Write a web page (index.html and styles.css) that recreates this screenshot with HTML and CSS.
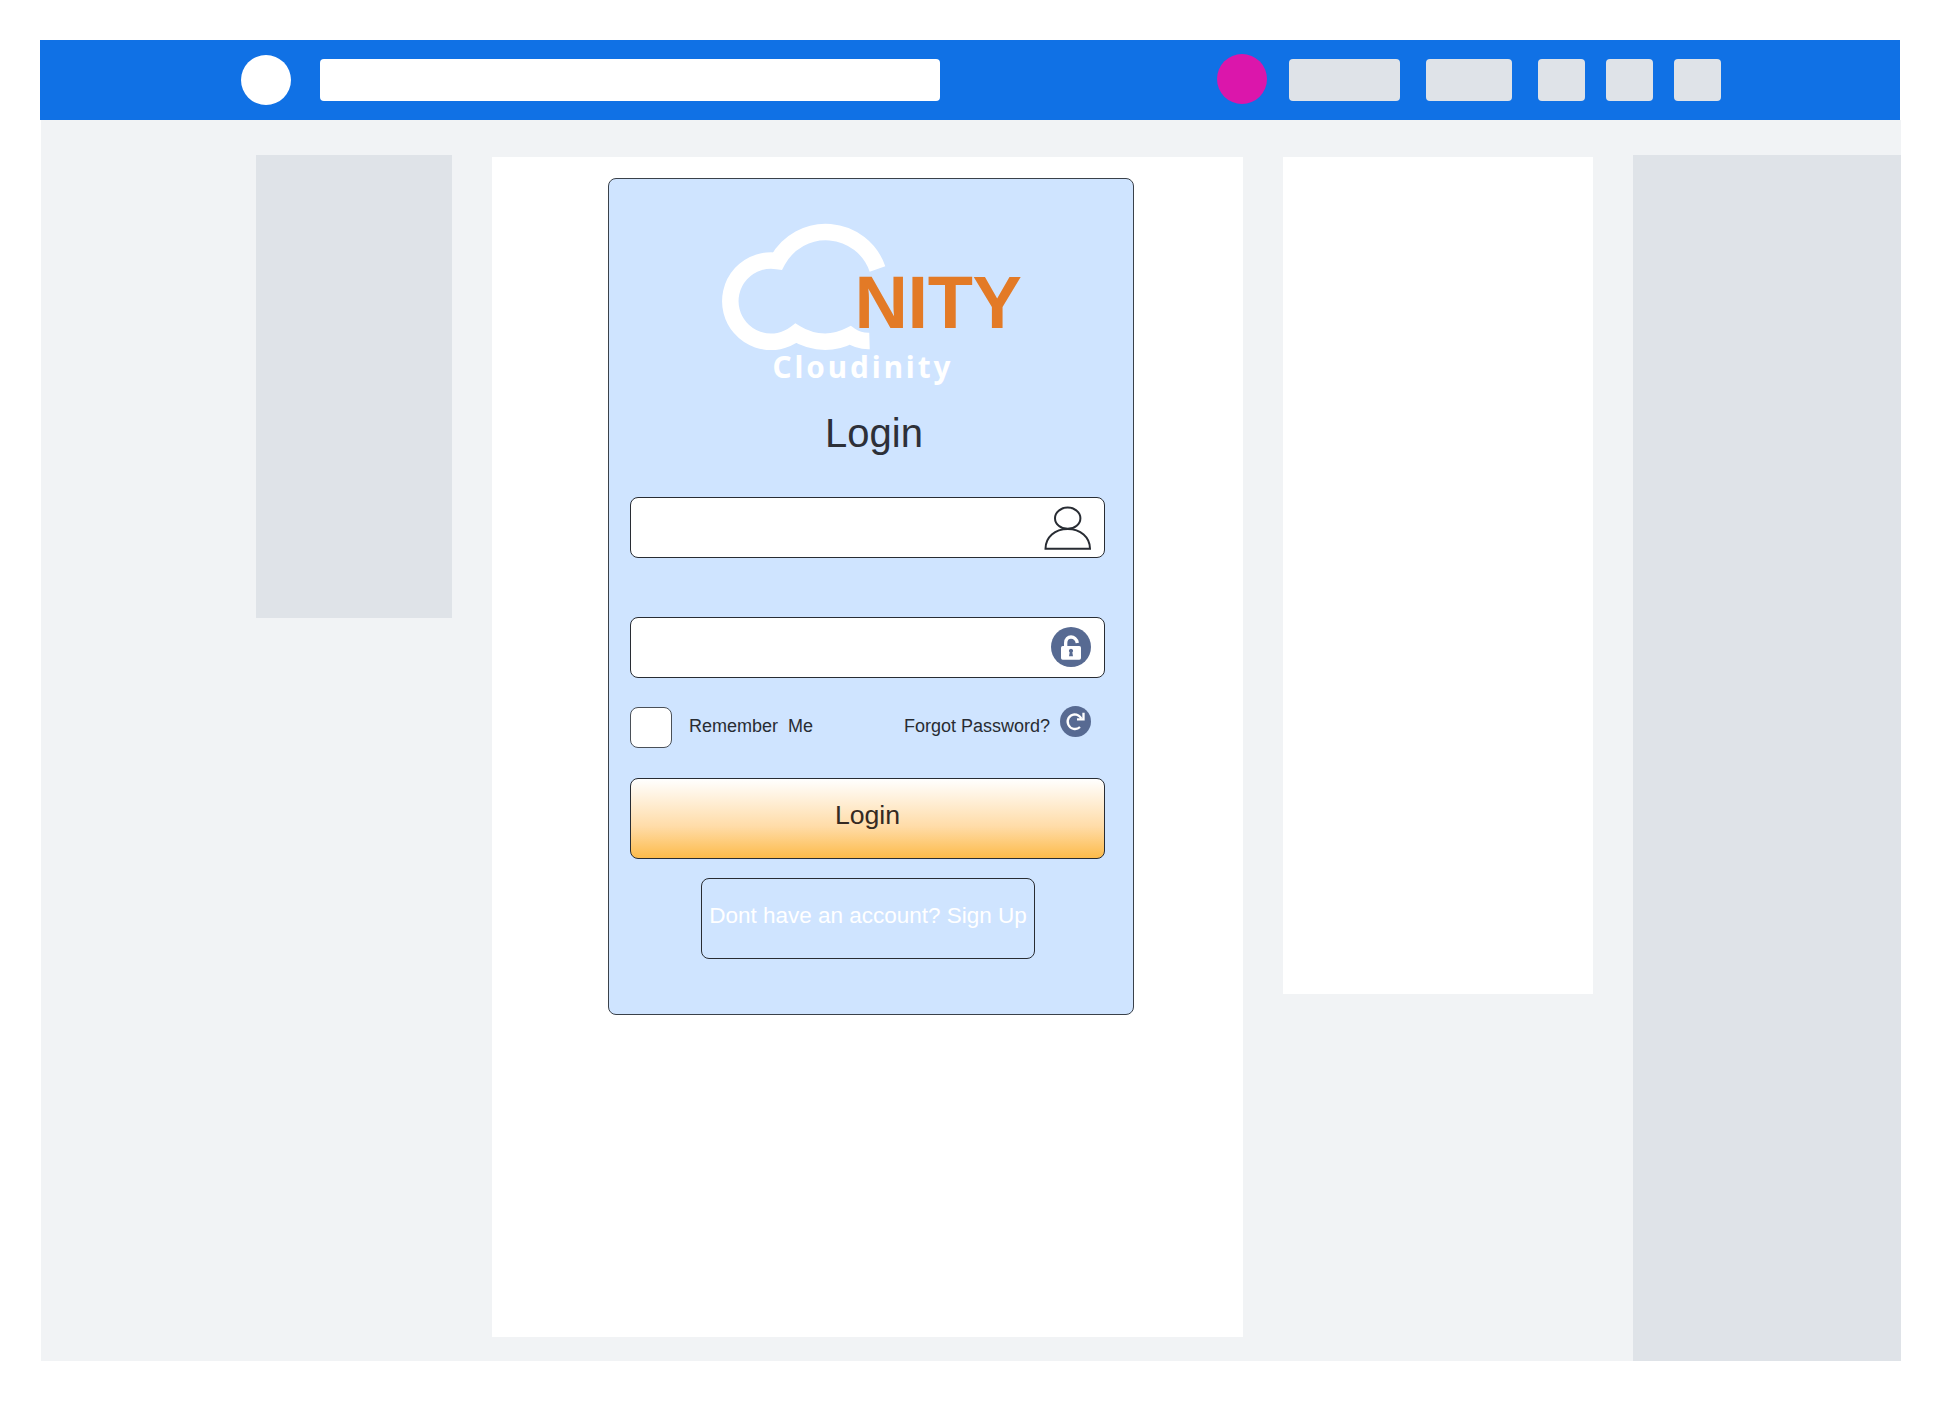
FILE: index.html
```html
<!DOCTYPE html>
<html lang="en">
<head>
<meta charset="utf-8">
<title>Cloudinity Login</title>
<link rel="stylesheet" href="styles.css">
</head>
<body>
<header class="topbar">
  <div class="dot"></div>
  <div class="search"></div>
  <div class="dot dot-pink"></div>
  <div class="chip chip-wide"></div>
  <div class="chip chip-mid"></div>
  <div class="chips">
    <div class="chip"></div>
    <div class="chip"></div>
    <div class="chip"></div>
  </div>
</header>
<main class="page">
  <aside class="side-left"></aside>
  <section class="content">
    <form class="card">
      <svg class="logo" viewBox="60 30 920 510">
        <path class="cloud" d="M532 177A164 164 0 0 0 232 153A122 122 0 1 0 287 370Q327 395 375 395Q414 395 450 376Q475 394 508 393"/>
        <text class="nity" x="463" y="354" textLength="502">NITY</text>
        <text class="brand" x="217" y="504" textLength="534">Cloudinity</text>
      </svg>
      <h1 class="title">Login</h1>
      <div class="field">
        <svg class="icon-user" viewBox="0 0 48 44">
          <ellipse cx="23.7" cy="12.2" rx="12.7" ry="10.6"/>
          <path d="M1.5 42.8C1.5 31 11 23 23.7 23S46 31 46 42.8Z"/>
        </svg>
      </div>
      <div class="field field-password">
        <svg class="icon-lock" viewBox="93 82 120 120">
          <circle cx="153" cy="142" r="60"/>
          <path class="shackle" d="M137 143V130C137 106 168 106 172 130"/>
          <rect class="body" x="123" y="139" width="60" height="41" rx="5"/>
          <path d="M153 147a6.500 6.500 0 0 1 4 11.500l2 11.500h-12l2-11.500a6.500 6.500 0 0 1 4-11.500z"/>
        </svg>
      </div>
      <div class="options">
        <span class="checkbox"></span>
        <span class="remember">Remember&nbsp; Me</span>
        <span class="forgot">Forgot Password?</span>
        <svg class="icon-reset" viewBox="119 318 93 93">
          <circle cx="165.500" cy="364.500" r="46.500"/>
          <path class="arc" d="M183 356C178 347 170 343 162 343A22 22 0 1 0 179 381"/>
          <path class="arc" d="M189.500 338V358H170"/>
        </svg>
      </div>
      <button class="login" type="button">Login</button>
      <button class="signup" type="button">Dont have an account? Sign Up</button>
    </form>
  </section>
  <section class="panel"></section>
  <aside class="side-right"></aside>
</main>
</body>
</html>
```

FILE: styles.css
```css
* { box-sizing: border-box; }
body {
  margin: 0;
  padding: 40px 39px 41px 40px;
  background: #fff;
  font-family: "Liberation Sans", Arial, sans-serif;
  color: #282c33;
}
.topbar {
  display: flex;
  align-items: center;
  width: 1860px;
  height: 80px;
  padding-left: 201.400px;
  background: #1071e5;
}
.dot { width: 50px; height: 50px; border-radius: 50%; background: #fff; }
.dot-pink { margin: 0 21.600px 3px 277px; background: #db16ab; }
.search { width: 620px; height: 42px; margin-left: 29px; border-radius: 4px; background: #fff; }
.chip { width: 47px; height: 42px; border-radius: 4px; background: #dfe3e8; }
.chip-wide { width: 111px; }
.chip-mid { width: 86px; margin-left: 26px; }
.chips { display: flex; gap: 21px; margin-left: 26px; }
.page {
  display: flex;
  align-items: flex-start;
  width: 1860px;
  height: 1241px;
  margin-left: 1px;
  padding: 35px 0 0 215px;
  background: #f1f3f5;
}
.side-left { width: 196px; height: 463px; background: #dfe3e8; }
.content { width: 751px; height: 1180px; margin: 2px 0 0 40px; padding: 21px 0 0 116px; background: #fff; }
.panel { width: 310px; height: 837px; margin: 2px 40px 0; background: #fff; }
.side-right { width: 268px; height: 1206px; background: #dfe3e8; }
.card {
  display: flex;
  flex-direction: column;
  align-items: flex-start;
  width: 526px;
  height: 837px;
  padding: 41px 28px 0 21px;
  border: 1px solid #3a414a;
  border-radius: 8px;
  background: #cfe4ff;
}
.logo { width: 307px; height: 170px; margin-left: 89.500px; }
.cloud { fill: none; stroke: #fff; stroke-width: 49.5; }
.nity { fill: #e37a26; font: bold 222px "Liberation Sans", Arial, sans-serif; }
.brand { fill: #fff; font: bold 89px "Noto Sans", sans-serif; }
.title { width: 488px; margin: 20px 0 0; text-align: center; font-size: 40px; font-weight: 400; line-height: 46px; color: #2d3038; }
.field {
  display: flex;
  align-items: center;
  justify-content: flex-end;
  width: 475px;
  height: 61px;
  margin-top: 41px;
  padding-right: 12px;
  border: 1px solid #282c33;
  border-radius: 8px;
  background: #fff;
}
.field-password { margin-top: 59px; padding-right: 13px; }
.icon-user { width: 48px; height: 44px; fill: none; stroke: #282c33; stroke-width: 2; }
.icon-lock { width: 40px; height: 40px; margin-bottom: 1px; fill: #576a92; }
.shackle { fill: none; stroke: #fff; stroke-width: 10; }
.body { fill: #fff; }
.options { display: flex; align-items: flex-start; margin-top: 29px; font-size: 18px; line-height: 20px; white-space: nowrap; }
.checkbox { width: 42px; height: 41px; border: 1px solid #4a5058; border-radius: 8px; background: #fff; }
.remember { width: 215px; margin: 9px 0 0 17px; }
.forgot { width: 147px; margin-top: 9px; }
.icon-reset { width: 31px; height: 31px; margin: -1px 0 0 9px; fill: #576a92; }
.arc { fill: none; stroke: #fff; stroke-width: 7; }
.login, .signup {
  padding: 0 0 7px;
  border: 1px solid #282c33;
  border-radius: 8px;
  font-family: inherit;
  white-space: nowrap;
}
.login {
  width: 475px;
  height: 81px;
  margin-top: 30px;
  background: linear-gradient(#fff, #ffdca8 60%, #fdbb4b);
  color: #352a22;
  font-size: 26.670px;
}
.signup { width: 334px; height: 81px; margin: 19px 0 0 71px; padding-bottom: 5px; background: none; color: #fff; font-size: 22.500px; }
```
